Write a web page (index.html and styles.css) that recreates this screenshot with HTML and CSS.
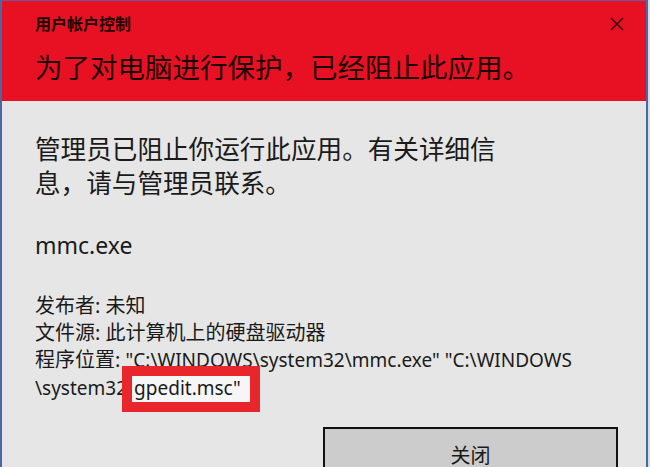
FILE: index.html
```html
<!DOCTYPE html>
<html lang="zh-CN">
  <head>
    <meta charset="UTF-8" />
    <meta name="viewport" content="width=device-width, initial-scale=1.0" />
    <title>用户帐户控制</title>
    <link rel="stylesheet" href="styles.css">
  </head>
  <body>
    <div class="window">
      <div class="header">
        <div class="title-row">
          <span class="title">用户帐户控制</span>
          <span class="close">
            <svg width="14" height="14" viewBox="0 0 14 14">
              <path d="M1 1 L13 13 M13 1 L1 13" stroke="#3a0d0d" stroke-width="1.6" fill="none" />
            </svg>
          </span>
        </div>
        <div class="headline">为了对电脑进行保护，已经阻止此应用。</div>
      </div>
      <div class="content">
        <p class="message">管理员已阻止你运行此应用。有关详细信<br>息，请与管理员联系。</p>
        <p class="app-name">mmc.exe</p>
        <div class="details">
          <div>发布者: 未知</div>
          <div>文件源: 此计算机上的硬盘驱动器</div>
          <div>程序位置: <span class="path">"C:\WINDOWS\system32\mmc.exe" "C:\WINDOWS<br>\system32\<span class="marked">gpedit.msc"</span></span></div>
        </div>
        <div class="actions">
          <button class="btn-close">关闭</button>
        </div>
      </div>
    </div>
  </body>
</html>
```

FILE: styles.css
```css
html,
body {
  margin: 0;
  padding: 0;
  height: 100%;
  overflow: hidden;
}

body {
  background: #d8dbe0;
  padding-right: 2px;
  box-sizing: border-box;
  font-family: "Noto Sans", "Noto Sans CJK SC", sans-serif;
  color: #1a1a1a;
}

.window {
  height: 100%;
  box-sizing: border-box;
  background: #e6e6e6;
  border-left: 2px solid #4c68a0;
  border-right: 2px solid #4c68a0;
  border-top: 1px solid #6a5a9c;
}

.header {
  height: 100px;
  box-sizing: border-box;
  padding: 13px 22px 0 33px;
  background: #e81123;
  color: #1c0404;
}

.title-row {
  display: flex;
  justify-content: space-between;
  align-items: center;
  height: 20px;
}

.title {
  font-size: 16px;
  line-height: 20px;
  font-weight: bold;
}

.close {
  display: flex;
  width: 14px;
  height: 14px;
}

.headline {
  margin-top: 16px;
  font-size: 27.5px;
  line-height: 36px;
}

.content {
  padding: 32px 28px 0 33px;
}

.message {
  margin: 0;
  font-size: 25.6px;
  line-height: 34px;
}

.app-name {
  margin: 27px 0 0;
  font-size: 23px;
  line-height: 34px;
}

.details {
  margin-top: 30px;
  font-size: 20px;
  line-height: 27px;
}

.path {
  font-size: 19px;
}

.marked {
  position: relative;
  z-index: 0;
}

.marked::before {
  content: "";
  position: absolute;
  left: -12px;
  right: -19px;
  top: -9px;
  bottom: -11px;
  z-index: -1;
  background: #f6f6f6;
  border: 10px solid #e8262b;
}

.actions {
  display: flex;
  justify-content: flex-end;
  margin-top: 25px;
}

.btn-close {
  width: 295px;
  height: 54px;
  padding: 0;
  background: #cccccc;
  border: 2px solid #111;
  font-family: "Noto Sans CJK SC", sans-serif;
  font-size: 20px;
  color: #1a1a1a;
}
```
